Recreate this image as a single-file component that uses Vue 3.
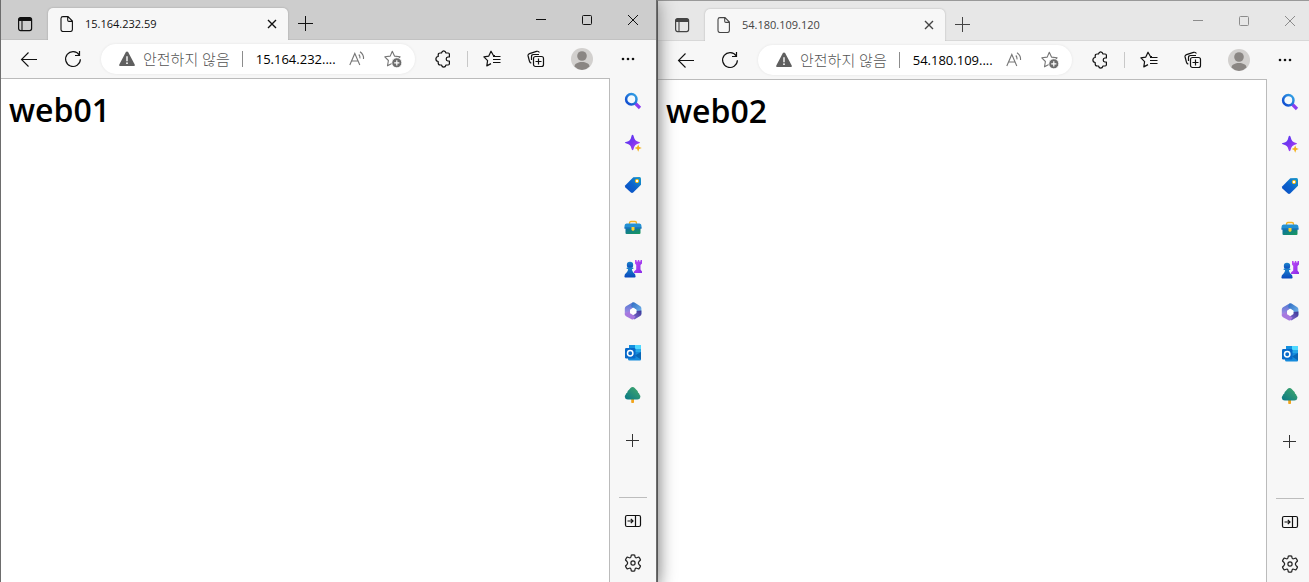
<script setup>
const windows = [
  { id: 'w1', title: '15.164.232.59', address: '15.164.232....', heading: 'web01', active: true },
  { id: 'w2', title: '54.180.109.120', address: '54.180.109....', heading: 'web02', active: false },
]
</script>

<template>
  <main class="desktop">
    <svg class="defs" aria-hidden="true">
      <defs>
        <linearGradient id="g-lens" x1="1" y1="0" x2="0" y2="1"><stop offset="0" stop-color="#35a5e5" /><stop offset="1" stop-color="#0c45cf" /></linearGradient>
        <linearGradient id="g-spark" x1="0" y1="0" x2="1" y2="1"><stop offset="0" stop-color="#4a3cf0" /><stop offset=".5" stop-color="#7a35f0" /><stop offset="1" stop-color="#c04af5" /></linearGradient>
        <linearGradient id="g-tag" x1="1" y1="0" x2="0" y2="1"><stop offset="0" stop-color="#1a9bc8" /><stop offset=".5" stop-color="#0b63cc" /><stop offset="1" stop-color="#0a4bc4" /></linearGradient>
        <linearGradient id="g-box" x1="0" y1="0" x2="1" y2="1"><stop offset="0" stop-color="#0b6fa8" /><stop offset="1" stop-color="#1a9a58" /></linearGradient>
        <linearGradient id="g-pawn" x1="0" y1="0" x2="0" y2="1"><stop offset="0" stop-color="#1c86cc" /><stop offset="1" stop-color="#0a47bd" /></linearGradient>
        <linearGradient id="g-rook" x1="0" y1="0" x2="1" y2="1"><stop offset="0" stop-color="#c04df5" /><stop offset="1" stop-color="#8a2be8" /></linearGradient>
        <linearGradient id="g-m1" x1="0" y1="0" x2="1" y2="1"><stop offset="0" stop-color="#2b68c0" /><stop offset="1" stop-color="#79bdf0" /></linearGradient>
        <linearGradient id="g-m2" x1="0" y1="0" x2="0" y2="1"><stop offset="0" stop-color="#4e78d0" /><stop offset="1" stop-color="#b18be8" /></linearGradient>
        <linearGradient id="g-m3" x1="0" y1="1" x2="1" y2="0"><stop offset="0" stop-color="#8a72d8" /><stop offset="1" stop-color="#3b3794" /></linearGradient>
        <linearGradient id="g-tree" x1="1" y1="0" x2="0" y2="1"><stop offset="0" stop-color="#45ab6a" /><stop offset="1" stop-color="#087786" /></linearGradient>
      </defs>
    </svg>

    <section v-for="w in windows" :key="w.id" class="window" :class="{ inactive: !w.active }">
      <header class="titlebar">
        <button class="tab-menu" aria-label="Tab actions">
          <svg width="16" height="16" viewBox="0 0 16 16"><rect x="1.6" y="1.6" width="13" height="13" rx="2" fill="none" stroke="currentColor" stroke-width="1.2" /><path d="M1.5 5V3.5a2 2 0 0 1 2-2h9a2 2 0 0 1 2 2V5z" fill="currentColor" /><path d="M5 5v9.5" stroke="currentColor" stroke-width="1.1" /></svg>
        </button>
        <div class="tab">
          <svg width="14" height="16" viewBox="0 0 14 16" fill="none" stroke="currentColor" stroke-width="1.1"><path d="M3 .6h5L12.4 5v8.500a2 2 0 0 1-2 2H3a2 2 0 0 1-2-2v-11A2 2 0 0 1 3 .6zM7.7.8v3.4c0 .8.4 1.2 1.2 1.2h3.3" /></svg>
          <span class="tab-title">{{ w.title }}</span>
          <button class="tab-close" aria-label="Close tab">
            <svg width="10" height="10" viewBox="0 0 10 10"><path d="M1 1l8 8M9 1L1 9" stroke="currentColor" stroke-width="1.4" /></svg>
          </button>
        </div>
        <button class="new-tab" aria-label="New tab">
          <svg width="15" height="15" viewBox="0 0 15 15"><path d="M7.5 0v15M0 7.5h15" stroke="currentColor" /></svg>
        </button>
        <div class="captions">
          <button aria-label="Minimize"><svg width="10" height="11" viewBox="0 0 10 11"><path d="M0 5.5h10" stroke="currentColor" /></svg></button>
          <button aria-label="Maximize"><svg width="10" height="10" viewBox="0 0 10 10"><rect x=".5" y=".5" width="9" height="9" rx="1" fill="none" stroke="currentColor" /></svg></button>
          <button aria-label="Close"><svg width="10" height="10" viewBox="0 0 10 10"><path d="M0 0l10 10M10 0L0 10" stroke="currentColor" /></svg></button>
        </div>
      </header>

      <nav class="toolbar" aria-label="Browser toolbar">
        <button aria-label="Back">
          <svg width="18" height="16" viewBox="0 0 18 16" fill="none" stroke="#111" stroke-width="1.1"><path d="M8.500 1.500l-7 7 7 7M1.500 8.500H17" /></svg>
        </button>
        <button aria-label="Refresh">
          <svg width="18" height="18" viewBox="0 0 18 18" fill="none" stroke="#111" stroke-width="1.2"><path d="M16.4 9.3A7.4 7.4 0 1 1 15.2 5M15.5 1v4.5H11" /></svg>
        </button>
        <div class="address">
          <svg class="warning" width="18" height="18" viewBox="0 0 18 18"><path d="M7.9 2.1a1.3 1.3 0 0 1 2.2 0l6.6 12.3c.4.8-.1 1.7-1 1.7H2.3c-.9 0-1.4-.9-1-1.7z" fill="#5f5f5f" /><path d="M9 6.2v5" stroke="#fff" stroke-width="1.4" /><circle cx="9" cy="13.2" r=".9" fill="#fff" /></svg>
          <label :for="w.id" class="security">안전하지 않음</label>
          <span class="divider"></span>
          <input :id="w.id" type="text" :value="w.address" readonly />
          <button class="read" aria-label="Read aloud">
            <svg width="16" height="16" viewBox="0 0 16 16" fill="none" stroke="#767676" stroke-width="1.1"><path d="M.8 14L5.8 2.5 10.8 14M2.6 10h6.4M9.8 3.5q1.5 1.5 1.1 3.8M11 .8q4 2.8 3.5 7.2" /></svg>
          </button>
          <button class="favorite" aria-label="Add to favorites">
            <svg width="18" height="18" viewBox="0 0 18 18"><path d="M8.3 1.2l2.2 4.900 5.600.7-4 3.900.8 5-4.600-2.500-4.800 2.600.9-5.300L.8 6.800l5.400-.7z" fill="none" stroke="#767676" stroke-width="1.1" stroke-linejoin="round" /><circle cx="12.800" cy="12.800" r="5" fill="#6c6c6c" stroke="#fff" stroke-width=".8" /><path d="M12.800 10.200v5.200M10.200 12.800h5.200" stroke="#fff" stroke-width="1.2" /></svg>
          </button>
        </div>
        <button aria-label="Extensions">
          <svg width="16" height="18" viewBox="0 0 16 18" fill="none" stroke="#111" stroke-width="1.2" stroke-linejoin="round"><path d="M3.200 5q0-2 2-2H6.500Q7 .9 8.700.9T11 3h2.200q1.200 0 1.200 1.200V7h-1.600q-1.600.3-1.600 2t1.600 2h1.600v2.800q0 1.200-1.200 1.200H11q-.6 2.100-2.300 2.100T6.500 15H5.200q-2 0-2-2v-1.500Q.9 11.200.9 9t2.300-2.500z" /></svg>
        </button>
        <span class="separator"></span>
        <button aria-label="Favorites">
          <svg width="18" height="18" viewBox="0 0 18 18" fill="none" stroke="#111" stroke-width="1.2" stroke-linejoin="round"><path d="M12 5.500l-1.700-.2L8 1.200 5.800 6.100.9 6.800l3.700 3.900-.8 5.200L8 13.600M10 6.500h7.500M10 9.500h7.500M10 12.500h7.500" /></svg>
        </button>
        <button aria-label="Collections">
          <svg width="18" height="18" viewBox="0 0 18 18" fill="none" stroke="#111" stroke-width="1.2"><rect x="6.500" y="6.500" width="10" height="10" rx="2" /><path d="M11.500 8.500v6M8.500 11.500h6M4.300 13.200Q2.900 12.800 2.400 11L1.100 6Q.7 4.200 2.500 3.600l7-2.200q2.100-.6 2.900 1.200M4.500 10V6.600q0-2.100 2-2.100H12" /></svg>
        </button>
        <button class="profile" aria-label="Profile">
          <svg width="22" height="22" viewBox="0 0 22 22"><circle cx="11" cy="11" r="11" fill="#d2d0ce" /><circle cx="11" cy="8" r="4.800" fill="#8a8683" /><path d="M3.500 18.500c0-6 15-6 15 0A11 11 0 0 1 11 22a11 11 0 0 1-7.500-3.500z" fill="#8a8683" /></svg>
        </button>
        <button aria-label="Settings and more">
          <svg width="14" height="4" viewBox="0 0 14 4" fill="#111"><circle cx="2" cy="2" r="1.300" /><circle cx="7" cy="2" r="1.300" /><circle cx="12" cy="2" r="1.300" /></svg>
        </button>
      </nav>

      <div class="body">
        <article class="page"><h1>{{ w.heading }}</h1></article>
        <aside class="sidebar">
          <button aria-label="Search">
            <svg width="18" height="18" viewBox="0 0 18 18"><path d="M11 11l5 5" stroke="#8a3df0" stroke-width="3.200" /><circle cx="7.300" cy="7.300" r="5.200" fill="#f4fafd" stroke="url(#g-lens)" stroke-width="2.500" /></svg>
          </button>
          <button aria-label="Discover">
            <svg width="18" height="18" viewBox="0 0 18 18"><path d="M8.500.8q.7 0 1 1l1 2.900q.7 1.800 2.500 2.500l2.700 1q.8.4 0 .9l-3 1.100Q11 10.900 10.300 12.700L9.400 15.600q-.8 1.400-1.600 0l-1-3Q6.200 10.900 4.500 10.200L1.200 9.100Q.4 8.600 1.200 8.200l3.100-1q1.700-.7 2.400-2.500L7.600 1.800Q7.800.8 8.500.8z" fill="url(#g-spark)" /><path d="M14.200 10.500l1 2.500 2.600 1-2.600 1.100-1 2.600-1.100-2.600-2.600-1.100 2.600-1z" fill="#f4b21b" /></svg>
          </button>
          <button aria-label="Shopping">
            <svg width="18" height="18" viewBox="0 0 18 18"><path d="M9.300 1.300L15.500 1Q17 1 17 2.500v6.200L9.200 16.500q-1.200.9-2.300 0l-5.500-5q-1-1.100 0-2.200z" fill="url(#g-tag)" /><circle cx="13" cy="5" r="1.700" fill="#fff" stroke="#f3bb1b" /></svg>
          </button>
          <button aria-label="Tools">
            <svg width="18" height="18" viewBox="0 0 18 18"><path d="M5.500 6V5q0-1.500 1.500-1.500h4q1.500 0 1.500 1.500v1" fill="none" stroke="#f2b224" stroke-width="1.300" /><path d="M1.500 10h15v5q0 1-1 1h-13q-1 0-1-1z" fill="url(#g-box)" /><path d="M2.500 5.500h13Q17.500 5.500 17.500 8v2.500H.5V8q0-2.500 2-2.500z" fill="#2491d3" /><path d="M.5 9.500h17v1H.5z" fill="#1262ad" /><path d="M7.500 9h3v3L9 13l-1.500-1z" fill="#ffd12b" /></svg>
          </button>
          <button aria-label="Games">
            <svg width="18" height="18" viewBox="0 0 18 18"><path d="M11 0h1.600v1.500h1.200V0h1.500v1.500h1.200V0H18v3.500L16.500 5v4.500L18 11.500V13h-8v-1.500l2.200-2V5L11 3.500z" fill="url(#g-rook)" /><circle cx="6" cy="5" r="3.200" fill="url(#g-pawn)" /><path d="M2.500 8.200q0-.8.8-.8h5.400q.8 0 .8.800T8.700 9H7.900q.1 2.600 1.700 3.800 2 1 2 3.700 0 1-1 1H1.400q-1 0-1-1 0-2.700 2-3.700Q4 11.600 4.100 9h-.8q-.8 0-.8-.8z" fill="url(#g-pawn)" /></svg>
          </button>
          <button aria-label="Microsoft 365">
            <svg width="18" height="18" viewBox="0 0 18 18"><path d="M8.500.4L2 4.200Q.8 5 .8 6.500v6.400l5.200-2.500V8L9.500 5.500l1.200-4.300z" fill="url(#g-m2)" /><path d="M8.500.5q1-.6 2 0L16 4q1.400.8 1.400 2.500v5.800l-4.900-1.800V7.700L7 4.200z" fill="url(#g-m1)" /><path d="M17.400 8.500V12q0 1.300-1.300 2.100L10.500 17.500l-3-3 5-3.400V9z" fill="url(#g-m3)" /><path d="M.8 11.500L6 9.200v2l5.500 3.200-2 2.900q-1 .4-2 0L2 14.200Q.8 13.500.8 11.500z" fill="#a778df" /><path d="M9.200 5.800l3.100 1.900v2.900l-3.100 1.800-3-1.800V7.700z" fill="#fff" /></svg>
          </button>
          <button aria-label="Outlook">
            <svg width="18" height="18" viewBox="0 0 18 18"><path d="M5 1h12v7H5z" fill="#28a8e8" /><path d="M11 1h6v4h-6z" fill="#50d9ff" /><path d="M5 1h6v4H5z" fill="#1490df" /><path d="M4 8h13v7.500q0 1-1 1H5.500Q4 16.500 4 15z" fill="#168bdc" /><path d="M11 11.500l6-3.500v7.500z" fill="#0966b5" /><rect x="1" y="4" width="10.500" height="10.500" rx="1.200" fill="#0869c9" /><circle cx="6.200" cy="9.200" r="2.700" fill="none" stroke="#fff" stroke-width="1.500" /></svg>
          </button>
          <button aria-label="Tree">
            <svg width="18" height="18" viewBox="0 0 18 18"><path d="M7.200 13h2.800v3.500q-1.400 1-2.800 0z" fill="#f2a51d" /><path d="M8.600 1q1.200 0 2.100 1l1.600 1.800q1.800 1 1.700 2.800 1.500.7 1.600 2.200 1 .8.800 2.200-.4 2.600-3 2.600H3.800Q1.200 13.600.8 11q-.1-1.300.8-2.200.2-1.600 1.700-2.300 0-1.800 1.700-2.700L6.500 2q.9-1 2.100-1z" fill="url(#g-tree)" /></svg>
          </button>
          <button class="add" aria-label="Customize sidebar">
            <svg width="13" height="13" viewBox="0 0 13 13"><path d="M6.500 0v13M0 6.500h13" stroke="#333" /></svg>
          </button>
          <div class="sidebar-footer">
            <button aria-label="Hide sidebar">
              <svg width="18" height="18" viewBox="0 0 18 18" fill="none" stroke="#111" stroke-width="1.2"><rect x="1.500" y="3.500" width="15" height="11" rx="1.500" /><path d="M11.500 3.500v11M3.500 9H9M6.800 6.800L9 9l-2.200 2.200" /></svg>
            </button>
            <button aria-label="Settings">
              <svg width="18" height="18" viewBox="0 0 18 18" fill="none" stroke="#222" stroke-width="1.2" stroke-linejoin="round"><circle cx="9" cy="9" r="2.100" /><path d="M7.300 1.100Q9 .7 10.700 1.100L11.100 3.100q.4 1 1.600.6l2-.7q1.300 1.200 1.800 3L15 7.500q-1.400 1.500 0 3l1.500 1.500q-.5 1.800-1.800 3l-2-.7q-1.200-.4-1.600.6l-.4 2q-1.700.4-3.400 0l-.4-2q-.4-1-1.600-.6l-2 .7q-1.300-1.200-1.800-3L3 10.500q1.400-1.500 0-3L1.500 6q.5-1.800 1.800-3l2 .7q1.200.4 1.600-.6z" /></svg>
            </button>
          </div>
        </aside>
      </div>
    </section>
  </main>
</template>

<style>
body { margin: 0; overflow: hidden; }
</style>

<style scoped>
* { box-sizing: border-box; }
.desktop { display: flex; height: 100vh; margin-right: -5px; overflow: hidden; font-family: "Open Sans", "Noto Sans CJK KR", sans-serif; color: #111; }
.defs { position: absolute; width: 0; height: 0; }
.window { flex: 1 1 0; min-width: 0; height: calc(100vh + 2px); display: flex; flex-direction: column; border: solid #6d6d6d; border-width: 0 1px; background: #f7f7f7; z-index: 1; position: relative; box-shadow: 0 0 18px rgba(0, 0, 0, .45); }
.window.inactive { z-index: 0; height: calc(100vh + 3px); border-top: 1px solid #999; box-shadow: none; }
button { display: flex; align-items: center; justify-content: center; padding: 0; border: 0; background: none; color: inherit; flex: none; }
svg { display: block; flex: none; }

.titlebar { display: flex; flex: none; height: 40px; background: #cdcdcd; border-bottom: 1px solid #c2c2c2; }
.inactive .titlebar { background: #e7e7e7; border-color: #d8d8d8; color: #444; }
.tab-menu { width: 47px; padding-top: 8px; }
.tab { display: flex; align-items: center; width: 240px; height: 32px; margin-top: 8px; padding: 0 7px 0 12px; background: #f7f7f7; border-radius: 5px 5px 0 0; box-shadow: 0 0 2px rgba(0, 0, 0, .25); clip-path: inset(-3px -3px 0 -3px); }
.tab-title { flex: 1; margin-left: 11px; font-size: 11px; line-height: 16px; }
.tab-close { width: 18px; height: 18px; }
.new-tab { width: 35px; padding-top: 7px; }
.captions { display: flex; margin-left: auto; }
.captions button { width: 46px; }
.inactive .captions { color: #8c8c8c; }

.toolbar { display: flex; flex: none; align-items: center; height: 38px; padding: 0 6px; }
.toolbar > button { width: 44px; height: 34px; }
.toolbar > .profile { width: 48px; }
.address { flex: 1; min-width: 0; display: flex; align-items: center; height: 30px; margin: 0 6px; padding: 0 2px 0 17px; background: #fff; border-radius: 15px; box-shadow: 0 0 3px rgba(0, 0, 0, .08); }
.security { margin-left: 7px; font-size: 15px; font-weight: 300; line-height: 20px; color: #555; white-space: nowrap; }
.divider { width: 1px; height: 16px; margin: 0 13px 0 12px; background: #8c8c8c; }
.address input { flex: 1; width: 0; min-width: 0; padding: 0; border: 0; outline: 0; background: none; font: 13px/20px "Open Sans", sans-serif; color: #000; }
.address .read { width: 32px; }
.address .favorite { width: 40px; }
.separator { width: 1px; height: 16px; margin: 0 2px; background: #c8c8c8; }

.body { flex: 1; min-height: 0; display: flex; }
.page { flex: 1; min-width: 0; padding: 8px; background: #fff; border: solid #bbb; border-width: 1px 1px 0 0; }
.inactive .page, .inactive .toolbar { box-shadow: inset 16px 0 14px -14px rgba(0, 0, 0, .16); }
.page h1 { margin: 0; font-size: 32px; line-height: 46px; font-weight: 600; color: #000; }
.sidebar { flex: none; width: 46px; padding-top: 2px; display: flex; flex-direction: column; }
.sidebar button { width: 46px; height: 42px; }
.sidebar .add { height: 48px; padding-right: 1px; }
.sidebar-footer { margin-top: auto; }
.sidebar-footer::before { content: ""; display: block; height: 1px; margin: 0 9px 2px; background: #bdbdbd; }
</style>
